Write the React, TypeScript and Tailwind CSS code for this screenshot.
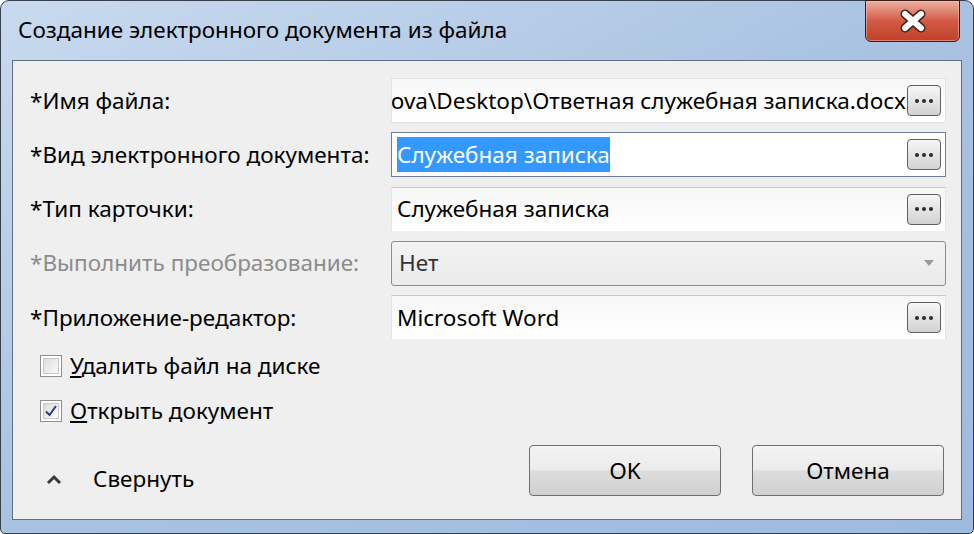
import React from "react";

const font = { fontFamily: '"Noto Sans", "Open Sans", sans-serif' };

function Ellipsis() {
  return (
    <div className="w-[34px] h-[31px] rounded-[4px] border border-[#5f5f5f] bg-gradient-to-b from-[#f6f6f6] via-[#e4e4e4] to-[#d2d2d2] flex items-center justify-center gap-[3px] shrink-0">
      <span className="w-[4px] h-[4px] rounded-full bg-[#2a2a2a]" />
      <span className="w-[4px] h-[4px] rounded-full bg-[#2a2a2a]" />
      <span className="w-[4px] h-[4px] rounded-full bg-[#2a2a2a]" />
    </div>
  );
}

function CloseButton() {
  return (
    <div className="absolute right-[13px] top-[-1px] w-[95px] h-[42px] rounded-b-[6px] border border-[#3d1a14] bg-gradient-to-b from-[#eab0a2] via-[#d25a44] to-[#c0402a] flex items-center justify-center shadow-[inset_0_0_0_1px_rgba(255,200,190,0.5)]">
      <svg width="28" height="24" viewBox="0 0 28 24">
        <path d="M6 5 L22 19 M22 5 L6 19" stroke="#4a2018" strokeWidth="9" strokeLinecap="round" />
        <path d="M6 5 L22 19 M22 5 L6 19" stroke="#ffffff" strokeWidth="6" strokeLinecap="round" />
      </svg>
    </div>
  );
}

function Checkbox({ checked }: { checked?: boolean }) {
  return (
    <div className="w-[22px] h-[22px] border border-[#8e8f8f] bg-white p-[2px] shrink-0">
      <div className="w-full h-full bg-gradient-to-br from-[#dcdcdc] to-[#fbfbfb] border border-[#c7c7c7] flex items-center justify-center">
        {checked && (
          <svg width="14" height="14" viewBox="0 0 14 14">
            <path d="M2 7.5 L5.5 11 L12 2" stroke="#2a3c78" strokeWidth="2" fill="none" />
          </svg>
        )}
      </div>
    </div>
  );
}

export default function App() {
  const labelCls = "h-[45px] flex items-center whitespace-nowrap text-[22.5px]";
  return (
    <div className="w-[974px] h-[534px] bg-white overflow-hidden" style={font}>
      <div className="relative w-[974px] h-[534px] rounded-t-[9px] rounded-b-[5px] border border-[#37414d] bg-gradient-to-br from-[#c9daee] via-[#a9c2e2] to-[#9fbadf] flex flex-col px-[11px] pb-[13px]">
        <div className="h-[59px] shrink-0 flex items-center pl-[6px] pb-[2px]">
          <span className="text-[22.5px] text-black">Создание электронного документа из файла</span>
        </div>
        <CloseButton />
        <div className="flex-1 border border-[#5e6e83] bg-[#efefef] flex flex-col pl-[17px] pr-[15px] pt-[17px]">
          <div className="flex">
            <div className="w-[361px] shrink-0 flex flex-col gap-[9.25px]">
              <div className={labelCls + " text-black"}>*Имя файла:</div>
              <div className={labelCls + " text-black"}>*Вид электронного документа:</div>
              <div className={labelCls + " text-black"}>*Тип карточки:</div>
              <div className={labelCls + " text-[#8c8c8c]"}>*Выполнить преобразование:</div>
              <div className={labelCls + " text-black"}>*Приложение-редактор:</div>
            </div>
            <div className="flex-1 min-w-0 flex flex-col gap-[9.25px]">
              <div className="h-[45px] border border-[#e2e2e2] bg-gradient-to-b from-[#f8f8f8] to-white flex items-center pr-[4px] overflow-hidden">
                <div className="flex-1 min-w-0 overflow-hidden whitespace-nowrap text-[22.5px] text-black flex justify-end pr-[1px]">
                  <span className="shrink-0">C:\Users\Petrova\Desktop\Ответная служебная записка.docx</span>
                </div>
                <Ellipsis />
              </div>
              <div className="h-[45px] border border-[#6d7f99] bg-white flex items-center pl-[5px] pr-[4px]">
                <div className="flex-1 text-[22.5px]">
                  <span className="bg-[#3399ff] text-white py-[2px]">Служебная записка</span>
                </div>
                <Ellipsis />
              </div>
              <div className="h-[45px] border-t border-t-[#c8c8c8] border-x border-x-[#e6e6e6] border-b border-b-[#eeeeee] bg-gradient-to-b from-[#f7f7f7] to-white flex items-center pl-[5px] pr-[4px]">
                <div className="flex-1 text-[22.5px] text-black">Служебная записка</div>
                <Ellipsis />
              </div>
              <div className="h-[45px] rounded-[3px] border border-[#8c8c8c] bg-gradient-to-b from-[#f2f2f2] to-[#ebebeb] flex items-center pl-[7px] pr-[10px]">
                <div className="flex-1 text-[22.5px] text-[#333]">Нет</div>
                <svg width="12" height="8" viewBox="0 0 12 8">
                  <path d="M1 1 L11 1 L6 7 Z" fill="#9a9a9a" />
                </svg>
              </div>
              <div className="h-[45px] border-t border-t-[#c8c8c8] border-x border-x-[#e6e6e6] border-b border-b-[#eeeeee] bg-gradient-to-b from-[#f7f7f7] to-white flex items-center pl-[5px] pr-[4px]">
                <div className="flex-1 text-[22.5px] text-black">Microsoft Word</div>
                <Ellipsis />
              </div>
            </div>
          </div>
          <div className="flex flex-col gap-[23px] mt-[15px] pl-[10px]">
            <div className="flex items-center gap-[8px] h-[22px]">
              <Checkbox />
              <span className="text-[22.5px] text-black"><span className="underline">У</span>далить файл на диске</span>
            </div>
            <div className="flex items-center gap-[8px] h-[22px]">
              <Checkbox checked />
              <span className="text-[22.5px] text-black"><span className="underline">О</span>ткрыть документ</span>
            </div>
          </div>
          <div className="flex mt-[23px]">
            <div className="flex items-center pl-[16px] w-[360px] pt-[16px]">
              <svg width="16" height="12" viewBox="0 0 16 12">
                <path d="M2 10 L8 4 L14 10" stroke="#3a3a3a" strokeWidth="3" fill="none" />
              </svg>
              <span className="ml-[31px] text-[22.5px] text-black">Свернуть</span>
            </div>
            <div className="flex-1 flex justify-end gap-[31px] pr-[2px]">
              <div className="w-[192px] h-[51px] rounded-[4px] border border-[#6f6f6f] bg-[linear-gradient(to_bottom,#f3f3f3_0%,#ececec_48%,#dcdcdc_52%,#d0d0d0_100%)] flex items-center justify-center text-[22.5px] text-black">OK</div>
              <div className="w-[192px] h-[51px] rounded-[4px] border border-[#6f6f6f] bg-[linear-gradient(to_bottom,#f3f3f3_0%,#ececec_48%,#dcdcdc_52%,#d0d0d0_100%)] flex items-center justify-center text-[22.5px] text-black">Отмена</div>
            </div>
          </div>
        </div>
      </div>
    </div>
  );
}
